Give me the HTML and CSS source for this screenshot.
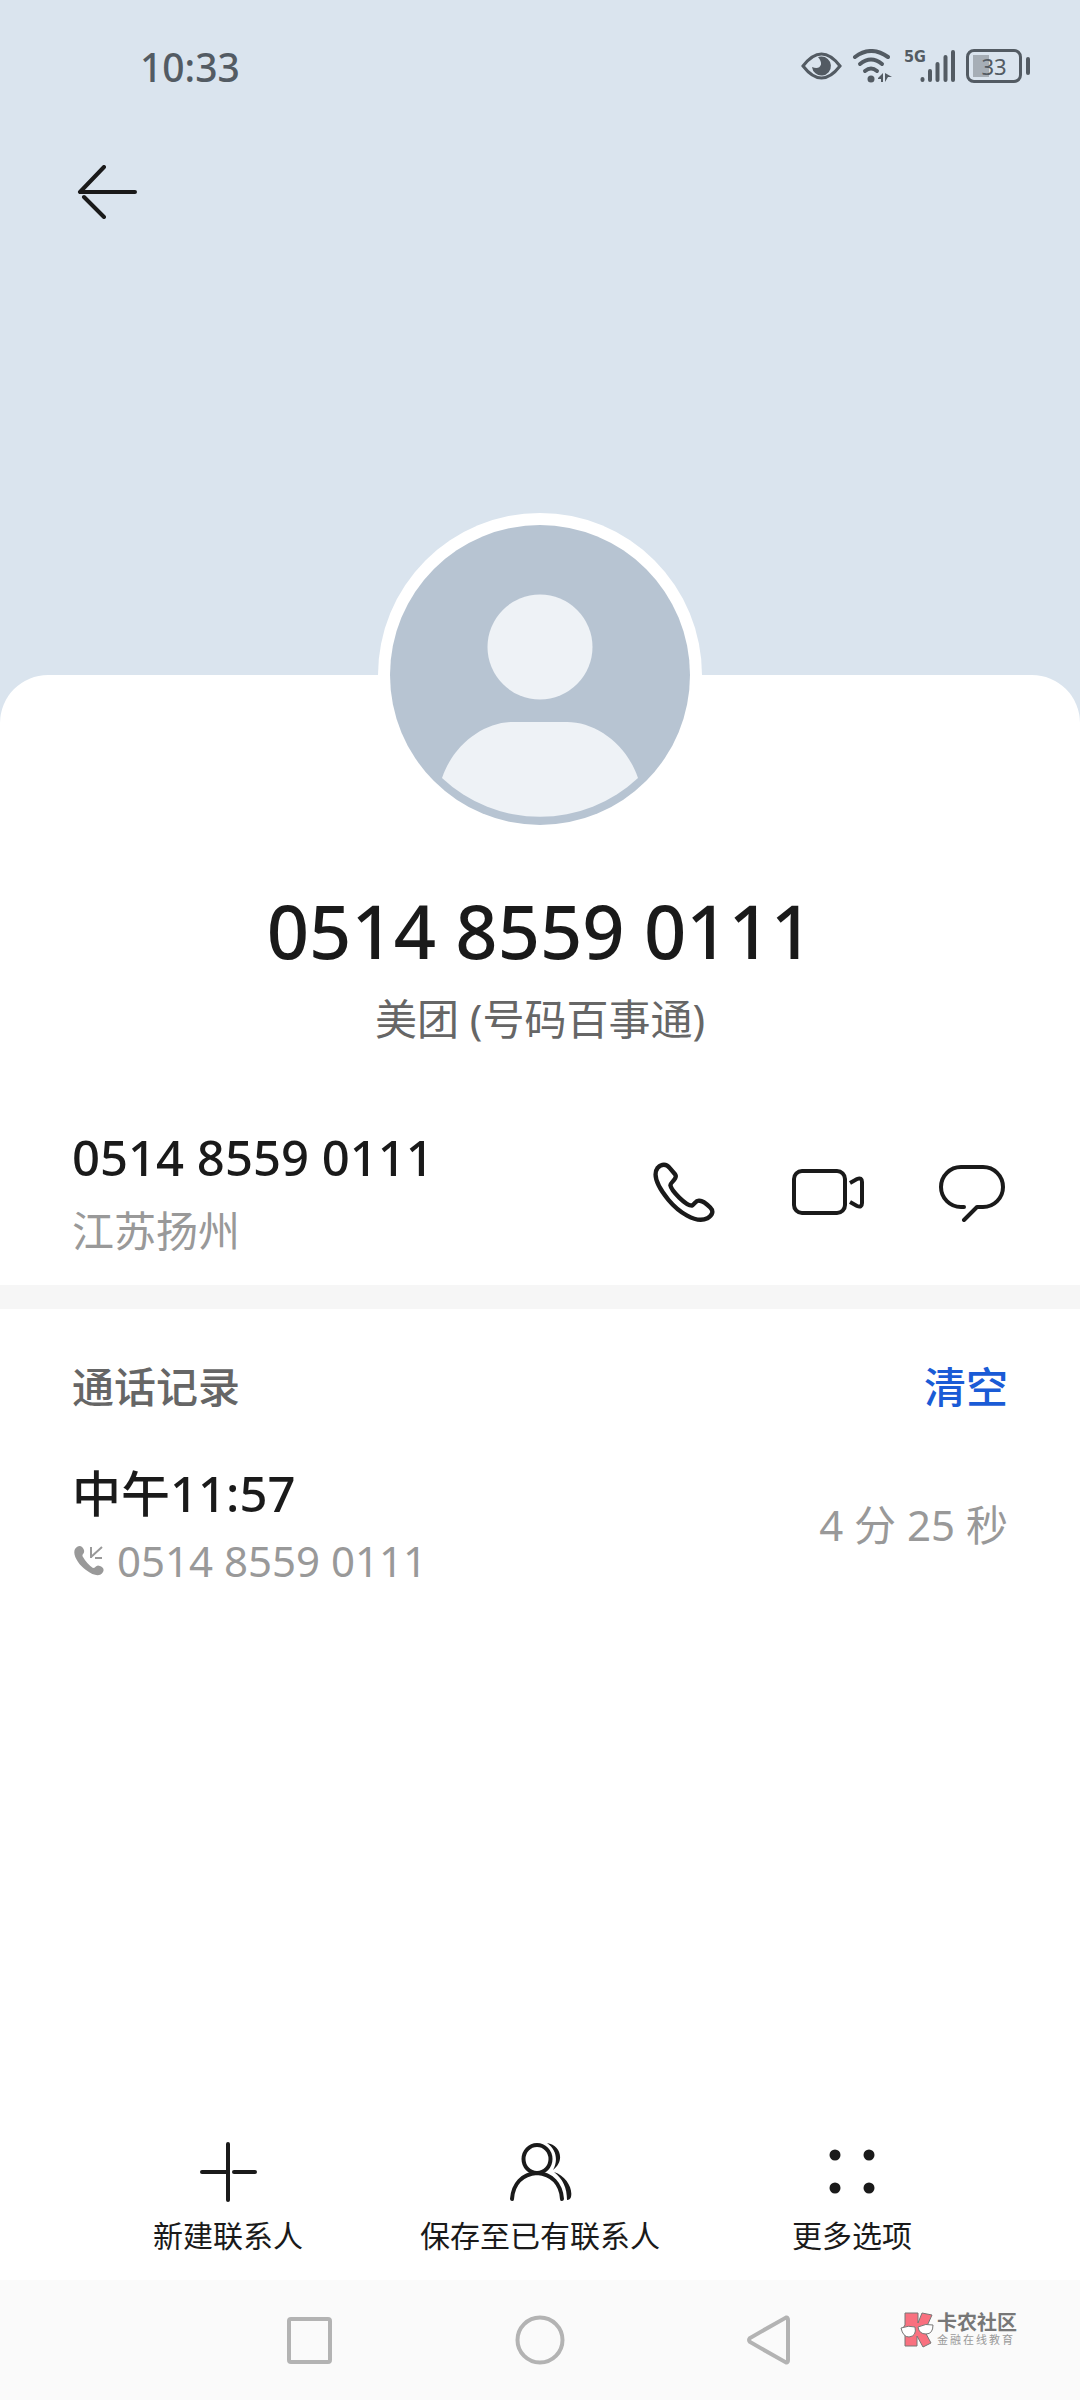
FILE: index.html
```
<!DOCTYPE html>
<html lang="zh-CN">
<head>
    <meta charset="utf-8">
    <meta name="viewport" content="width=device-width, initial-scale=1">
    <title>联系人详情</title>
    <link rel="stylesheet" href="styles.css">
</head>
<body>

    <header class="hero">
        <div class="status">
            <span class="time">10:33</span>
            <div class="status-icons">
                <svg width="41" height="28" viewBox="0 0 41 28">
                    <path d="M2 14Q20.500-10 39 14Q20.500 38 2 14Z" fill="none" stroke="#535b63" stroke-width="3"/>
                    <path d="M20 4.500A9.500 9.500 0 1 1 11 15Q18 18 20 12.500Q20.500 9 17 5Z" fill="#535b63"/>
                </svg>
                <svg width="42" height="34" viewBox="0 0 42 34">
                    <g fill="none" stroke="#535b63" stroke-width="4" stroke-linecap="round">
                        <path d="M3 8Q19-4 36 8"/>
                        <path d="M8 15Q19 6 30 15"/>
                        <path d="M13 22Q19 17 25 22"/>
                    </g>
                    <circle cx="19" cy="30" r="3.500" fill="#535b63"/>
                    <path d="M26 29L31 24V33H29V30H26ZM33 33V24L40 28H36Z" fill="#535b63"/>
                </svg>
                <div class="signal">
                    <span>5G</span>
                    <svg width="36" height="34" viewBox="0 0 36 34">
                        <path d="M2.500 30V31M10 22V31M17.500 15V31M25.500 8V31M33 3V31" stroke="#535b63" stroke-width="4" stroke-linecap="round"/>
                    </svg>
                </div>
                <div class="battery"><span>33</span></div>
            </div>
        </div>
        <button class="back" aria-label="返回">
            <svg width="60" height="54" viewBox="0 0 60 54">
                <path d="M27 2L3 27H58M7 32L27 52" fill="none" stroke="#1a1a1a" stroke-width="4" stroke-linecap="round" stroke-linejoin="round"/>
            </svg>
        </button>
    </header>

    <main class="sheet">
        <div class="avatar">
            <svg viewBox="0 0 300 300">
                <circle cx="150" cy="150" r="150" fill="#b7c4d2"/>
                <circle cx="150" cy="122" r="52.500" fill="#eef2f6"/>
                <path d="M52 253C64 218 95 197 123 197H177C205 197 236 218 248 253A143 143 0 0 1 52 253Z" fill="#eef2f6"/>
            </svg>
        </div>
        <h1>0514 8559 0111</h1>
        <p class="source">美团 (号码百事通)</p>

        <section class="number">
            <div>
                <p class="primary">0514 8559 0111</p>
                <p class="secondary place">江苏扬州</p>
            </div>
            <div class="actions">
                <button aria-label="拨打电话">
                    <svg width="72" height="60" viewBox="-1 0 74 60">
                        <path d="M9 5C13 1 18 1 21 5L27 12C30 16 22 20 22 23C23 29 38 44 44 44C47 43 48 38 52 39C56 39 60 43 63 46C67 50 65 54 60 57C48 63 30 50 20 38C11 27 3 13 9 5Z" fill="none" stroke="#1a1a1a" stroke-width="4.500" stroke-linejoin="round"/>
                    </svg>
                </button>
                <button aria-label="视频通话">
                    <svg width="72" height="60" viewBox="0 0 72 60">
                        <rect x="2" y="9" width="51" height="42" rx="8" fill="none" stroke="#1a1a1a" stroke-width="4"/>
                        <path d="M58 21L65 17Q70 15 70 20V41Q70 46 65 44L58 40" fill="none" stroke="#1a1a1a" stroke-width="4"/>
                    </svg>
                </button>
                <button aria-label="发送短信">
                    <svg width="72" height="60" viewBox="0 0 72 60">
                        <path d="M28 45H25A20 20 0 0 1 25 5H47A20 20 0 0 1 47 45H41L28 58" fill="none" stroke="#1a1a1a" stroke-width="4" stroke-linecap="round" stroke-linejoin="round"/>
                    </svg>
                </button>
            </div>
        </section>

        <section class="log">
            <div class="log-head">
                <h2>通话记录</h2>
                <button class="clear">清空</button>
            </div>
            <div class="call">
                <div>
                    <p class="primary">中午11:57</p>
                    <p class="secondary from">
                        <svg width="32" height="32" viewBox="0 0 32 32">
                            <path d="M3 4C6 0 10 0 12 5C13 9 9 9 11 12Q15 19 21 23C24 23 24 19 28 21Q33 23 31 27C28 32 22 31 14 25C7 20 0 10 3 4Z" fill="#999"/>
                            <path d="M30 2L19 12M19 2V13M23 13H30" fill="none" stroke="#999" stroke-width="2"/>
                        </svg>
                        0514 8559 0111
                    </p>
                </div>
                <span class="secondary">4 分 25 秒</span>
            </div>
        </section>
    </main>

    <footer>
        <div class="toolbar">
            <button>
                <svg width="64" height="60" viewBox="0 0 64 60">
                    <path d="M32 2V58M6 30H32M38 30H59" stroke="#1a1a1a" stroke-width="4" stroke-linecap="round"/>
                </svg>
                新建联系人
            </button>
            <button>
                <svg width="64" height="60" viewBox="0 0 64 60">
                    <g fill="none" stroke="#1a1a1a" stroke-width="4" stroke-linecap="round">
                        <ellipse cx="29" cy="17" rx="13.500" ry="14"/>
                        <path d="M4 57C5 42 14 32 29 31C44 32 53 42 54 57"/>
                    </g>
                    <path d="M39 1C53 3 57 19 45 28C50 19 49 8 39 1ZM46 30C58 34 65 46 63 55Q62 58 59 58C59 46 55 37 46 30Z" fill="#1a1a1a"/>
                </svg>
                保存至已有联系人
            </button>
            <button>
                <svg width="64" height="60" viewBox="0 0 64 60">
                    <g fill="#1a1a1a">
                        <circle cx="15" cy="13" r="5.500"/>
                        <circle cx="49" cy="13" r="5.500"/>
                        <circle cx="15" cy="46" r="5.500"/>
                        <circle cx="49" cy="46" r="5.500"/>
                    </g>
                </svg>
                更多选项
            </button>
        </div>
        <nav class="sysnav">
            <button aria-label="最近任务">
                <svg width="50" height="50" viewBox="0 0 50 50"><rect x="4" y="4" width="41" height="43" rx="2" fill="none" stroke="#b3b3b3" stroke-width="4"/></svg>
            </button>
            <button aria-label="主屏幕">
                <svg width="50" height="50" viewBox="0 0 50 50"><circle cx="25" cy="25" r="22.500" fill="none" stroke="#b3b3b3" stroke-width="4"/></svg>
            </button>
            <button aria-label="返回上一级">
                <svg width="50" height="50" viewBox="0 0 50 50"><path d="M41 2.500Q43 2 43 5V45Q43 48 41 47.500L5 27Q3 25 5 23Z" fill="none" stroke="#b3b3b3" stroke-width="4"/></svg>
            </button>
            <div class="watermark">
                <svg width="34" height="36" viewBox="0 0 34 36">
                    <path d="M5 1H18V11L22 1L32 3L27 14L24 18L31 31L23 35L17 24V34H5V22L3 16L5 13Z" fill="#f9707f" stroke="#777" stroke-width="1"/>
                    <path d="M1 16Q9 13 15 15Q17 24 9 25Q3 25 1 16ZM18 15Q26 11 33 13Q33 22 26 22Q19 22 18 15Z" fill="#fff" stroke="#777" stroke-width="1"/>
                </svg>
                <div>
                    <strong>卡农社区</strong>
                    <small>金融在线教育</small>
                </div>
            </div>
        </nav>
    </footer>

</body>
</html>
```
FILE: styles.css
```
* {
    margin: 0;
    padding: 0;
    box-sizing: border-box;
}

body {
    display: flex;
    flex-direction: column;
    min-height: 100vh;
    background: #fff;
    color: #1a1a1a;
    font-family: "Noto Sans", "Noto Sans CJK SC", sans-serif;
}

button {
    border: 0;
    background: none;
    color: inherit;
    font: inherit;
    cursor: pointer;
}

svg {
    display: block;
    flex-shrink: 0;
}

/* top area */
.hero {
    height: 723px;
    background: #dae4ee;
}

.status {
    display: flex;
    align-items: center;
    justify-content: space-between;
    height: 132px;
    padding: 0 58px 0 140px;
    color: #535b63;
}

.time {
    font-size: 39px;
    font-weight: 500;
}

.status-icons {
    display: flex;
    align-items: center;
    gap: 10px;
}

.signal {
    display: flex;
    align-items: flex-start;
}

.signal span {
    width: 16px;
    font: bold 16px/16px "Liberation Sans Narrow", "DejaVu Sans Condensed", sans-serif;
}

.battery {
    position: relative;
    width: 56px;
    height: 34px;
    border: 3px solid #535b63;
    border-radius: 8px;
    background: linear-gradient(#a6aeb6, #a6aeb6) 4px center / 16px 22px no-repeat;
    font: 22px/28px "Noto Sans", sans-serif;
    text-align: center;
}

.battery::after {
    content: "";
    position: absolute;
    top: 5px;
    right: -11px;
    width: 4px;
    height: 18px;
    border-radius: 2px;
    background: #535b63;
}

.back {
    display: block;
    margin: 33px 77px;
}

/* contact card */
.sheet {
    flex: 1;
    margin-top: -48px;
    border-radius: 48px 48px 0 0;
    background: #fff;
    text-align: center;
}

.avatar {
    width: 324px;
    margin: -162px auto 0;
    padding: 12px;
    border-radius: 50%;
    background: #fff;
}

h1 {
    margin: 42px 0 4px;
    font-size: 74px;
    font-weight: 500;
    line-height: 104px;
}

.source {
    color: #666;
    font-size: 42px;
    line-height: 64px;
}

.number {
    display: flex;
    align-items: center;
    justify-content: space-between;
    margin-top: 70px;
    padding: 0 72px 22px;
    border-bottom: 24px solid #f6f6f6;
    text-align: left;
}

.primary {
    font-size: 49px;
    font-weight: 500;
    line-height: 72px;
}

.secondary {
    color: #999;
    font-size: 42px;
    line-height: 64px;
}

.place {
    margin-top: 6px;
}

.actions {
    display: flex;
    gap: 72px;
}

.log {
    padding: 40px 72px;
    text-align: left;
}

.log-head,
.call {
    display: flex;
    align-items: center;
    justify-content: space-between;
}

.log-head {
    margin-bottom: 32px;
    color: #666;
}

h2,
.clear {
    font-size: 42px;
    font-weight: 500;
    line-height: 76px;
}

.clear {
    color: #1a5bd6;
}

.from {
    display: flex;
    align-items: center;
    gap: 13px;
}

/* bottom actions */
.toolbar {
    display: grid;
    grid-template-columns: repeat(3, 1fr);
    padding: 0 72px 22px;
}

.toolbar button {
    display: flex;
    flex-direction: column;
    align-items: center;
    gap: 12px;
    font-size: 30px;
    font-weight: 400;
    line-height: 44px;
    white-space: nowrap;
}

.sysnav {
    position: relative;
    display: flex;
    align-items: center;
    justify-content: center;
    gap: 180px;
    height: 120px;
    background: #fafafa;
}

.watermark {
    position: absolute;
    right: 63px;
    top: 32px;
    display: flex;
    align-items: center;
    gap: 3px;
    color: #777;
}

.watermark strong,
.watermark small {
    display: block;
}

.watermark strong {
    font-size: 20px;
    line-height: 20px;
}

.watermark small {
    color: #999;
    font-size: 11px;
    letter-spacing: 2px;
    line-height: 14px;
}
```
